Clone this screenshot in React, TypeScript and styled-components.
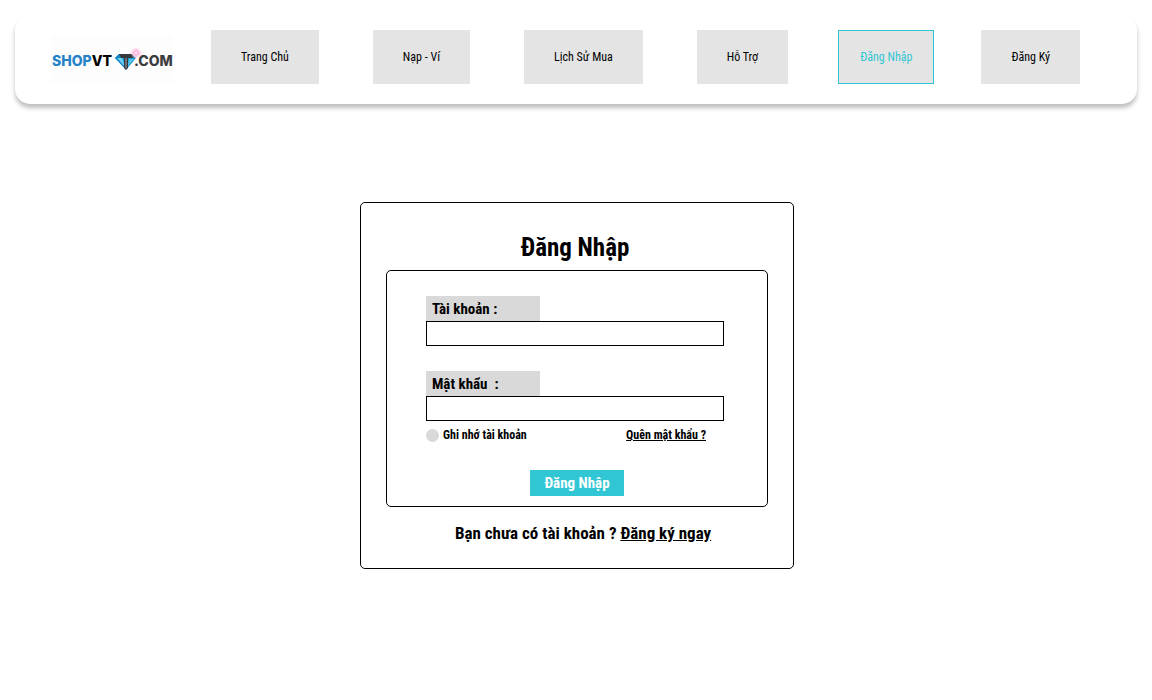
import React, { useState } from "react";
import styled, { createGlobalStyle } from "styled-components";

const GlobalStyle = createGlobalStyle`
  *, *::before, *::after { box-sizing: border-box; }
  body {
    margin: 0;
    background: #fff;
    color: #000;
    font-family: "Roboto Condensed", "Liberation Sans Narrow", Roboto, sans-serif;
    font-size: 12px;
    line-height: 16px;
  }
  a { color: inherit; }
`;

const Header = styled.header`
  display: flex;
  align-items: flex-end;
  margin: 15px 15px 0;
  padding: 15px 57px 20px 36px;
  border-radius: 15px;
  background: #fff;
  box-shadow: 0 4px 4px rgba(0, 0, 0, 0.25);
`;

const Logo = styled.a`
  display: flex;
  align-items: center;
  flex: none;
  width: 122px;
  height: 49px;
  margin-right: 38px;
  padding: 2px 0 0 1px;
  background: #fdfdfd;
  font-family: Inter, sans-serif;
  font-size: 14px;
  font-weight: 800;
  text-decoration: none;
`;

const LogoPart = styled.span<{ $color: string }>`
  color: ${(p) => p.$color};
`;

const Gem = styled.svg`
  flex: none;
  width: 30px;
  height: 26px;
  margin: 0 -10px 0 2px;
`;

const Nav = styled.nav`
  display: flex;
  flex: 1;
  justify-content: space-between;
`;

const NavGroup = styled.div<{ $gap: number }>`
  display: flex;
  gap: ${(p) => p.$gap}px;
`;

const NavLink = styled.a<{ $active?: boolean }>`
  display: flex;
  align-items: center;
  height: 54px;
  padding: 0 ${(p) => (p.$active ? 21 : 29)}px;
  border: 1px solid ${(p) => (p.$active ? "#31c6d4" : "#e4e4e4")};
  background: #e4e4e4;
  color: ${(p) => (p.$active ? "#31c6d4" : "#000")};
  text-decoration: none;
  white-space: nowrap;
`;

const Main = styled.main`
  display: flex;
  justify-content: center;
  padding: 98px 14px 40px 16px;
`;

const Card = styled.section`
  width: 100%;
  max-width: 434px;
  padding: 29px 25px 24px;
  border: 1px solid #000;
  border-radius: 5px;
`;

const Title = styled.h1`
  margin: 0 4px 6px 0;
  font-size: 25px;
  line-height: 32px;
  font-weight: 700;
  text-align: center;
`;

const Form = styled.form`
  display: flex;
  flex-direction: column;
  padding: 25px 43px 10px 39px;
  border: 1px solid #000;
  border-radius: 5px;
`;

const Field = styled.div`
  display: flex;
  flex-direction: column;
  & + & { margin-top: 25px; }
`;

const FieldLabel = styled.label`
  width: 114px;
  padding: 1px 0 0 6px;
  background: #d9d9d9;
  font-size: 15px;
  line-height: 24px;
  font-weight: 700;
  white-space: pre;
`;

const TextInput = styled.input`
  width: 100%;
  height: 25px;
  padding: 0 6px;
  border: 1px solid #000;
  border-radius: 0;
  background: #fff;
  font: inherit;
  font-size: 15px;
  outline: none;
`;

const Options = styled.div`
  display: flex;
  align-items: center;
  justify-content: space-between;
  margin-top: 6px;
  padding-right: 18px;
  font-weight: 700;
`;

const Remember = styled.label`
  display: flex;
  align-items: center;
  gap: 4px;
`;

const RoundCheck = styled.input`
  appearance: none;
  width: 13px;
  height: 13px;
  margin: 0;
  border-radius: 50%;
  background: #d9d9d9;
  &:checked { background: #31c6d4; }
`;

const Submit = styled.button`
  align-self: center;
  height: 26px;
  margin: 27px 0 0 4px;
  padding: 0 14px;
  border: 0;
  background: #31c6d4;
  color: #fff;
  font: inherit;
  font-size: 15px;
  font-weight: 700;
  cursor: pointer;
`;

const SignUp = styled.p`
  margin: 15px 0 0 12px;
  font-size: 17px;
  line-height: 22px;
  font-weight: 700;
  text-align: center;
`;

function GemIcon() {
  return (
    <Gem viewBox="0 0 30 26" aria-hidden="true">
      <defs>
        <radialGradient id="glow">
          <stop offset="0" stopColor="#ff9fd0" />
          <stop offset="0.5" stopColor="#ffb3dc" stopOpacity="0.7" />
          <stop offset="1" stopColor="#ffd0ea" stopOpacity="0" />
        </radialGradient>
      </defs>
      <path d="M5 6H18L22 10 12 22 1 10Z" fill="#1c9bd8" />
      <path d="M1 10 5 6 7 10 10 19Z" fill="#1181bd" />
      <path d="M3 10H8L11 19Z" fill="#6fd0f2" />
      <path d="M15 11H20L14 18Z" fill="#5bc4ec" />
      <path d="M5 6H18L20 10H14V20L12 22 10 20V10H7Z" fill="#35383d" />
      <path d="M11 10H13V20L12 21 11 20Z" fill="#6b6f75" />
      <circle cx="22" cy="5" r="6" fill="url(#glow)" />
      <path d="M22 0V13M15 5H30" stroke="#ffb9de" strokeOpacity="0.4" />
      <circle cx="22" cy="5" r="1" fill="#fff" />
    </Gem>
  );
}

const shopLinks = ["Trang Chủ", "Nạp - Ví", "Lịch Sử Mua", "Hỗ Trợ"];

export default function App() {
  const [remember, setRemember] = useState(false);
  return (
    <>
      <GlobalStyle />
      <Header>
        <Logo href="#" aria-label="SHOPVT.COM">
          <LogoPart $color="#2582c9">SHOP</LogoPart>
          <LogoPart $color="#000">VT</LogoPart>
          <GemIcon />
          <LogoPart $color="#3c3c3e">.COM</LogoPart>
        </Logo>
        <Nav>
          <NavGroup $gap={54}>
            {shopLinks.map((text) => (
              <NavLink key={text} href="#">{text}</NavLink>
            ))}
          </NavGroup>
          <NavGroup $gap={47}>
            <NavLink href="#" $active aria-current="page">Đăng Nhập</NavLink>
            <NavLink href="#">Đăng Ký</NavLink>
          </NavGroup>
        </Nav>
      </Header>
      <Main>
        <Card>
          <Title>Đăng Nhập</Title>
          <Form onSubmit={(e) => e.preventDefault()}>
            <Field>
              <FieldLabel htmlFor="account">Tài khoản :</FieldLabel>
              <TextInput id="account" type="text" autoComplete="username" />
            </Field>
            <Field>
              <FieldLabel htmlFor="password">{"Mật khẩu  :"}</FieldLabel>
              <TextInput id="password" type="password" autoComplete="current-password" />
            </Field>
            <Options>
              <Remember>
                <RoundCheck
                  type="checkbox"
                  checked={remember}
                  onChange={(e) => setRemember(e.target.checked)}
                />
                Ghi nhớ tài khoản
              </Remember>
              <a href="#">Quên mật khẩu ?</a>
            </Options>
            <Submit type="submit">Đăng Nhập</Submit>
          </Form>
          <SignUp>
            Bạn chưa có tài khoản ? <a href="#">Đăng ký ngay</a>
          </SignUp>
        </Card>
      </Main>
    </>
  );
}
